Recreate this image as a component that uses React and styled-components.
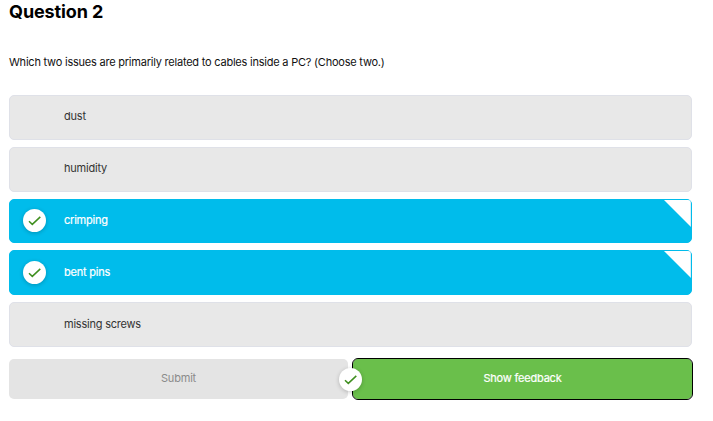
import React from 'react';
import styled, { createGlobalStyle } from 'styled-components';

const GlobalStyle = createGlobalStyle`
  * { box-sizing: border-box; }
  body {
    margin: 0;
    background: #fff;
    font-family: Inter, "Liberation Sans", sans-serif;
    font-size: 11px;
    letter-spacing: -0.22px;
    color: #222;
    overflow: hidden;
  }
`;

const Page = styled.main`
  width: 713px;
  height: 421px;
  padding: 0 21px 0 9px;
`;

const Title = styled.h1`
  margin: 0;
  height: 24px;
  font-size: 18px;
  letter-spacing: -0.1px;
  line-height: 24px;
  font-weight: 700;
  color: #000;
  white-space: nowrap;
`;

const Prompt = styled.p`
  margin: 30px 0 25px;
  height: 16px;
  line-height: 16px;
  color: #111;
  white-space: nowrap;
`;

const Options = styled.div`
  display: flex;
  flex-direction: column;
  gap: 7px;
`;

const Option = styled.div`
  position: relative;
  display: grid;
  grid-template-columns: 54px 1fr;
  align-items: center;
  height: ${(p) => (p.$short ? 44 : 45)}px;
  padding-bottom: ${(p) => (p.$raised ? 4 : 2)}px;
  border: 1px solid ${(p) => (p.$selected ? '#00bceb' : '#dfe1e8')};
  border-radius: 5px;
  background: ${(p) => (p.$selected ? '#00bceb' : '#e8e8e8')};
  color: ${(p) => (p.$selected ? '#fff' : '#333')};
  -webkit-text-stroke: ${(p) => (p.$selected ? '0.2px #fff' : '0')};
`;

const Corner = styled.span`
  position: absolute;
  top: 0;
  right: 0;
  width: 27px;
  height: 27px;
  border-top-right-radius: 3px;
  background: linear-gradient(to right, #fff 26px, #d9eef8 26px);
  clip-path: polygon(0 0, 100% 0, 100% 100%);
`;

const Badge = styled.span`
  display: flex;
  align-items: center;
  justify-content: center;
  width: 23px;
  height: 23px;
  margin: 1px 0 0 13px;
  border-radius: 50%;
  background: #fff;
  box-shadow: 0 1px 4px rgba(0, 0, 0, 0.22);
`;

const Actions = styled.div`
  position: relative;
  display: grid;
  grid-template-columns: 339px 339px;
  gap: 5px;
  margin-top: 12px;
`;

const Button = styled.button`
  height: 40px;
  padding: 0 0 2px;
  border: 0;
  border-radius: 5px;
  background: ${(p) => (p.$primary ? '#6abf4b' : '#e4e4e4')};
  color: ${(p) => (p.$primary ? '#fff' : '#8b8b8b')};
  outline: ${(p) => (p.$primary ? '1px solid #000' : 'none')};
  font: inherit;
  letter-spacing: -0.2px;
  -webkit-text-stroke: ${(p) => (p.$primary ? '0.2px #fff' : '0')};
`;

const ActionBadge = styled(Badge)`
  position: absolute;
  left: 330px;
  top: 9px;
  margin: 0;
`;

const Check = () => (
  <svg width="13" height="13" viewBox="0 0 13 13" fill="none" aria-hidden="true">
    <path d="M1 7.2 4.3 10.4 12.3 2.9" stroke="#3f8f1f" strokeWidth="1.5" />
  </svg>
);

const options = [
  { label: 'dust', raised: true },
  { label: 'humidity', raised: true },
  { label: 'crimping', selected: true, short: true },
  { label: 'bent pins', selected: true },
  { label: 'missing screws' },
];

export default function App() {
  return (
    <Page>
      <GlobalStyle />
      <Title>Question 2</Title>
      <Prompt>Which two issues are primarily related to cables inside a PC? (Choose two.)</Prompt>
      <Options>
        {options.map(({ label, selected, short, raised }) => (
          <Option key={label} $selected={selected} $short={short} $raised={raised}>
            <div>{selected && <Badge><Check /></Badge>}</div>
            <span>{label}</span>
            {selected && <Corner />}
          </Option>
        ))}
      </Options>
      <Actions>
        <Button type="button">Submit</Button>
        <Button type="button" $primary>Show feedback</Button>
        <ActionBadge><Check /></ActionBadge>
      </Actions>
    </Page>
  );
}
